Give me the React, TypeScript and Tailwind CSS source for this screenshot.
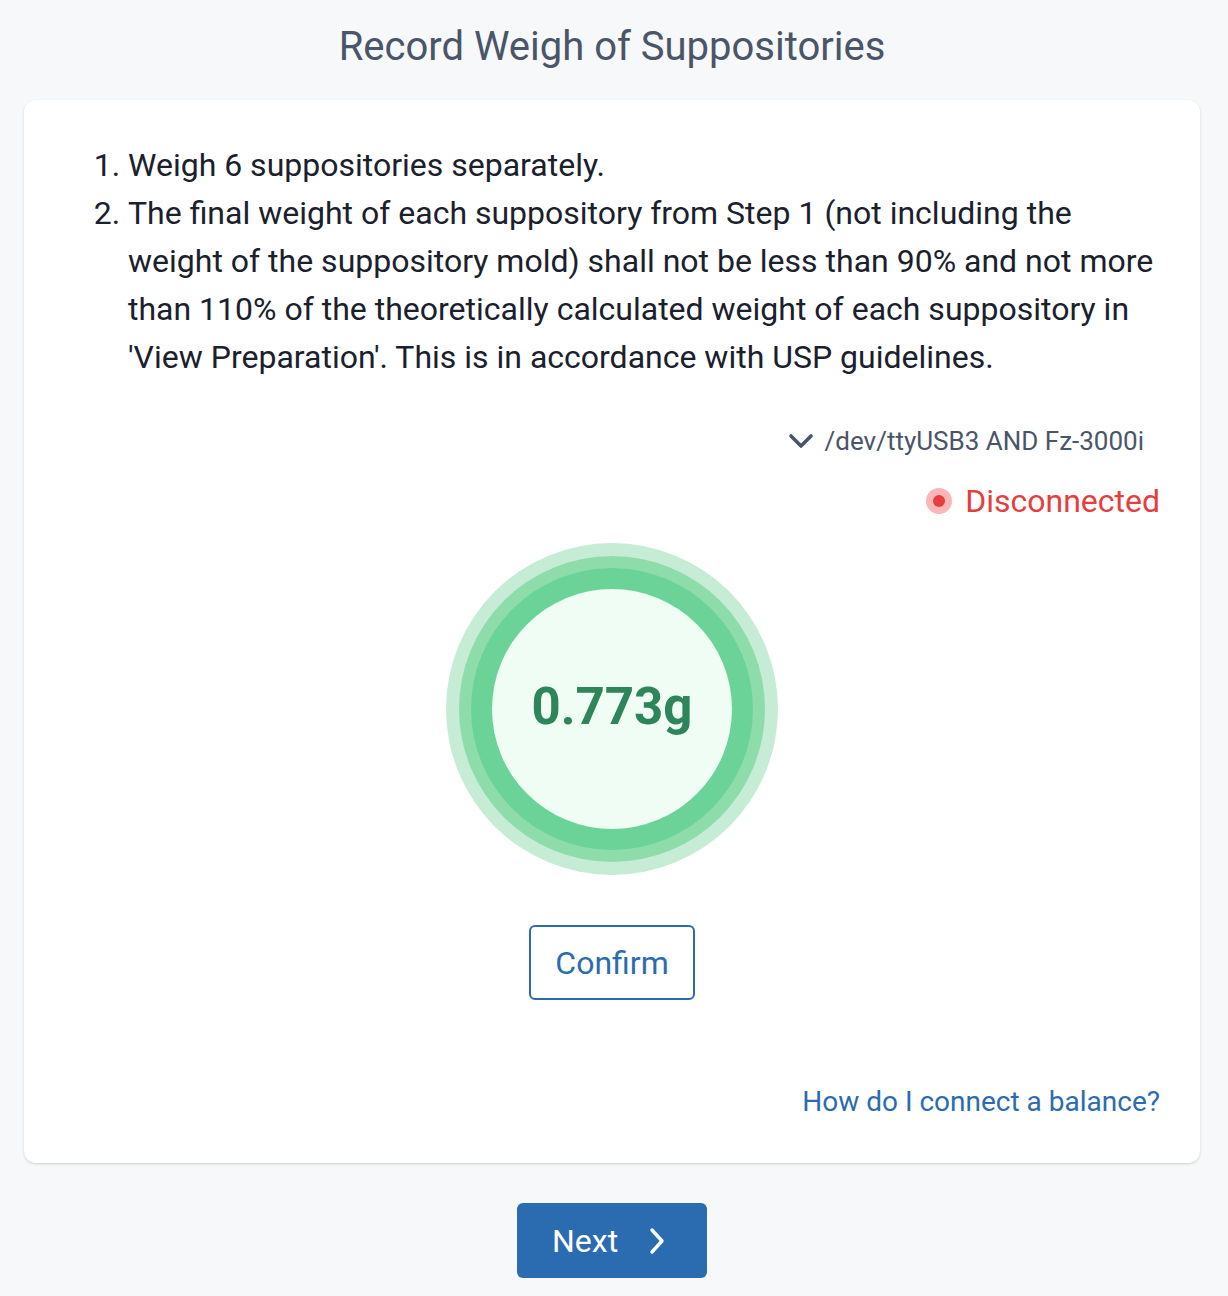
export default function App() {
  const steps = [
    "Weigh 6 suppositories separately.",
    "The final weight of each suppository from Step 1 (not including the weight of the suppository mold) shall not be less than 90% and not more than 110% of the theoretically calculated weight of each suppository in 'View Preparation'. This is in accordance with USP guidelines.",
  ];

  return (
    <div
      className="min-h-screen bg-[#f7f8fa] flex flex-col items-center pl-[24px] pr-[28px]"
      style={{ fontFamily: "Roboto, 'Liberation Sans', sans-serif" }}
    >
      <h1 className="text-[40px] leading-[48px] text-[#4a5568] mt-[23px] mb-[29px]">
        Record Weigh of Suppositories
      </h1>

      <div className="w-full bg-white rounded-xl shadow-[0_1px_3px_rgba(0,0,0,0.12),0_1px_2px_rgba(0,0,0,0.06)] pt-[41px] pb-[45px] px-[40px] flex flex-col">
        <ol className="list-decimal pl-[64px] text-[32px] leading-[48px] text-[#1a202c]">
          {steps.map((step, i) => (
            <li key={i}>{step}</li>
          ))}
        </ol>

        <div className="flex justify-end items-center mt-[44px] pr-[16px] text-[#4a5568]">
          <svg width="26" height="16" viewBox="0 0 26 16" className="mr-[11px]">
            <polyline points="3,3 13,13 23,3" fill="none" stroke="currentColor" strokeWidth="3.6" strokeLinecap="round" strokeLinejoin="round" />
          </svg>
          <span className="text-[26px] leading-[32px]">/dev/ttyUSB3 AND Fz-3000i</span>
        </div>

        <div className="flex justify-end items-center mt-[26px]">
          <span className="w-[26px] h-[26px] rounded-full bg-[#fdb6b6] flex items-center justify-center mr-[13px]">
            <span className="w-[12px] h-[12px] rounded-full bg-[#e53e3e]" />
          </span>
          <span className="text-[32px] leading-[36px] text-[#e53e3e]">Disconnected</span>
        </div>

        <div className="flex justify-center mt-[24px]">
          <div className="w-[332px] h-[332px] rounded-full bg-[#c6ecd6] flex items-center justify-center">
            <div className="w-[306px] h-[306px] rounded-full bg-[#8fdcab] flex items-center justify-center">
              <div className="w-[282px] h-[282px] rounded-full bg-[#6bd397] flex items-center justify-center">
                <div className="w-[240px] h-[240px] rounded-full bg-[#effdf4] flex items-center justify-center">
                  <span className="text-[51px] font-bold text-[#2f855a] -mt-[4px]">0.773g</span>
                </div>
              </div>
            </div>
          </div>
        </div>

        <div className="flex justify-center mt-[50px]">
          <button className="w-[166px] h-[75px] border-2 border-[#2b6cb0] rounded-md text-[32px] text-[#2b6cb0] bg-white">
            Confirm
          </button>
        </div>

        <div className="flex justify-end mt-[86px]">
          <a className="text-[28px] leading-[32px] text-[#2b6cb0]">How do I connect a balance?</a>
        </div>
      </div>

      <button className="mt-[40px] mb-[18px] w-[190px] h-[75px] bg-[#2b6cb0] rounded-md text-white text-[32px] flex items-center pl-[35px]">
        <span>Next</span>
        <svg width="20" height="30" viewBox="0 0 20 30" className="ml-[29px]">
          <polyline points="5,4 15,15 5,26" fill="none" stroke="currentColor" strokeWidth="3.4" strokeLinecap="round" strokeLinejoin="round" />
        </svg>
      </button>
    </div>
  );
}
